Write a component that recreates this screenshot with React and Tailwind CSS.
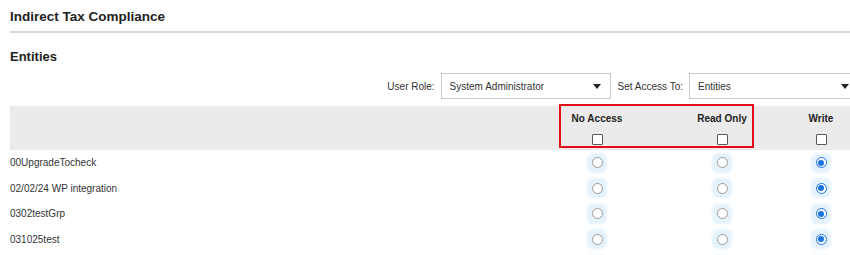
import React from "react";

const rows = [
  "00UpgradeTocheck",
  "02/02/24 WP integration",
  "0302testGrp",
  "031025test",
  "",
];

function Radio({ checked }) {
  return (
    <span className="flex items-center justify-center w-[14px] h-[14px] rounded-[3px] bg-[#e4f2fc] shadow-[0_0_3px_3px_#e4f2fc]">
      {checked ? (
        <span className="flex items-center justify-center w-[11px] h-[11px] rounded-full border border-[#1a73e0] bg-white">
          <span className="w-[6px] h-[6px] rounded-full bg-[#1a73e0]" />
        </span>
      ) : (
        <span className="w-[11px] h-[11px] rounded-full border border-[#9a9a9a] bg-white" />
      )}
    </span>
  );
}

function Checkbox() {
  return <span className="block w-[11px] h-[11px] rounded-[1px] border border-[#5a5a5a] bg-white" />;
}

function Select({ value }) {
  return (
    <div className="flex items-center justify-between w-[170px] h-[26px] border border-[#c8c8c8] bg-white pl-[8px] pr-[9px] text-[10px] text-[#333]">
      <span>{value}</span>
      <svg width="8" height="5" viewBox="0 0 8 5">
        <path d="M0 0 L8 0 L4 5 Z" fill="#222" />
      </svg>
    </div>
  );
}

export default function App() {
  return (
    <div
      className="w-[850px] h-[255px] overflow-hidden bg-white"
      style={{ fontFamily: '"Liberation Sans", Arial, sans-serif' }}
    >
      <div className="pl-[10px]">
        <div className="pt-[9px] h-[33px] border-b-2 border-[#d8d8d8] text-[13.5px] font-bold text-[#222] leading-[16px]">
          Indirect Tax Compliance
        </div>
        <div className="mt-[16px] text-[13px] font-bold text-[#222] leading-[16px]">Entities</div>
        <div className="mt-[8px] flex items-center justify-end mr-[-9px] text-[10px] text-[#333]">
          <span className="mr-[6px]">User Role:</span>
          <Select value="System Administrator" />
          <span className="ml-[7px] mr-[6px]">Set Access To:</span>
          <Select value="Entities" />
        </div>
        <div className="relative mt-[7px]">
          <div className="grid grid-cols-[1fr_100px_150px_48px] pr-[5px] h-[44px] bg-[#ebebeb] text-[10px] font-bold text-[#222]">
            <div />
            {["No Access", "Read Only", "Write"].map((h) => (
              <div key={h} className="flex flex-col items-center pt-[7px]">
                <span className="leading-[12px]">{h}</span>
                <span className="mt-[9px]">
                  <Checkbox />
                </span>
              </div>
            ))}
          </div>
          <div className="absolute left-[549px] top-[-2px] w-[195px] h-[44px] border-2 border-[#e3101a]" />
          {rows.map((r, i) => (
            <div
              key={i}
              className="grid grid-cols-[1fr_100px_150px_48px] pr-[5px] h-[25.5px] items-center text-[10px] text-[#333]"
            >
              <span>{r}</span>
              <span className="flex justify-center">
                <Radio />
              </span>
              <span className="flex justify-center">
                <Radio />
              </span>
              <span className="flex justify-center">
                <Radio checked />
              </span>
            </div>
          ))}
        </div>
      </div>
    </div>
  );
}
